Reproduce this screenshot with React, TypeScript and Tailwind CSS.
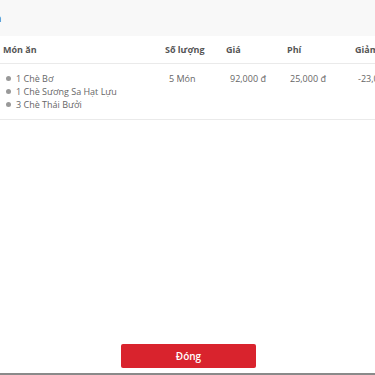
const items = ["1 Chè Bơ", "1 Chè Sương Sa Hạt Lựu", "3 Chè Thái Bưởi"];

export default function App() {
  return (
    <div
      className="flex h-[375px] w-[375px] flex-col overflow-hidden bg-white text-[9px] text-[#555]"
      style={{ fontFamily: '"Open Sans", "Noto Sans", sans-serif' }}
    >
      <div className="flex h-[36px] shrink-0 items-center overflow-hidden bg-[#f8f8f8]">
        <span className="-ml-[6px] whitespace-nowrap text-[11px] font-bold text-[#333]">
          n
        </span>
      </div>

      <div className="grid h-[28px] shrink-0 grid-cols-[165px_61px_61px_68px_1fr] items-center border-b border-[#eaeaea] font-bold text-[#555]">
        <span className="pl-[3px]">Món ăn</span>
        <span>Số lượng</span>
        <span>Giá</span>
        <span>Phí</span>
        <span className="whitespace-nowrap">Giảm giá</span>
      </div>

      <div className="grid h-[56px] shrink-0 grid-cols-[165px_61px_61px_68px_1fr] items-start border-b border-[#eaeaea] pt-[8px] text-[#666]">
        <ul className="flex flex-col pl-[6px] leading-[13px]">
          {items.map((it) => (
            <li key={it} className="flex items-center gap-[5px]">
              <span className="h-[5px] w-[5px] rounded-full bg-[#999]" />
              <span>{it}</span>
            </li>
          ))}
        </ul>
        <span className="pl-[4px] leading-[13px]">5 Món</span>
        <span className="pl-[4px] leading-[13px]">92,000 đ</span>
        <span className="pl-[3px] leading-[13px]">25,000 đ</span>
        <span className="pl-[3px] leading-[13px] whitespace-nowrap">-23,000 đ</span>
      </div>

      <div className="flex-1" />

      <div className="flex shrink-0 justify-center pb-[5px] pl-[2px]">
        <button className="h-[24px] w-[135px] rounded-[2px] bg-[#d9232d] text-[10px] font-semibold text-white">
          Đóng
        </button>
      </div>
      <div className="h-[2px] shrink-0 bg-[#8a8a8a]" />
    </div>
  );
}
